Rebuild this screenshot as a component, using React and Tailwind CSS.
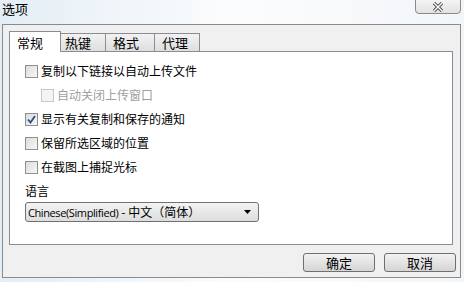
// Boîte de dialogue « 选项 » façon Windows 7
const font = { fontFamily: '"Noto Sans CJK SC", "Liberation Sans", sans-serif' }

function CheckBox({ checked, disabled }) {
  return (
    <span
      className={`w-[13px] h-[13px] border flex items-center justify-center shrink-0 ${
        disabled ? 'border-[#c8c8c8] bg-[#f4f4f4]' : 'border-[#8e8f8f] bg-gradient-to-br from-[#dcdcdc] to-[#f8f8f8]'
      }`}
    >
      {checked && (
        <svg width="9" height="9" viewBox="0 0 9 9">
          <path d="M1 4.5 L3.5 7.5 L8 1" fill="none" stroke="#2c4a8c" strokeWidth="1.8" />
        </svg>
      )}
    </span>
  )
}

function Row({ label, checked, disabled, indent }) {
  return (
    <div className={`h-[24px] flex items-center gap-[3px] ${indent ? 'pl-[16px]' : ''}`}>
      <CheckBox checked={checked} disabled={disabled} />
      <span className={disabled ? 'text-[#a0a0a0]' : 'text-black'}>{label}</span>
    </div>
  )
}

export default function App() {
  // Onglets inactifs : largeur et retrait du texte
  const tabs = [
    { label: '热键', cls: 'w-[46px] pl-[4px]' },
    { label: '格式', cls: 'w-[50px] pl-[7px]' },
    { label: '代理', cls: 'w-[46px] pl-[7px]' },
  ]

  return (
    <div
      className="w-[464px] h-[282px] relative overflow-hidden bg-gradient-to-r from-[#e4eef6] via-[#fbfcfd] to-[#f3f6f9] text-[12px] leading-none flex flex-col"
      style={font}
    >
      {/* Barre de titre */}
      <div className="h-[24px] flex items-start shrink-0">
        <span className="pl-[2px] pt-[2px] text-[13px] text-black">选项</span>
      </div>
      <div className="absolute top-[-1px] left-[415px] w-[46px] h-[15px] border border-[#8a8a8a] rounded-b-[4px] bg-gradient-to-b from-[#f4f4f4] to-[#e2e2e2] flex items-center justify-center">
        <svg width="12" height="10" viewBox="0 0 12 10">
          <path d="M2 1 L10 9 M10 1 L2 9" stroke="#4a4a4a" strokeWidth="3.2" />
          <path d="M2 1 L10 9 M10 1 L2 9" stroke="#ffffff" strokeWidth="1.4" />
        </svg>
      </div>

      {/* Cadre de la fenêtre */}
      <div className="ml-[2px] mr-[3px] h-[254px] border border-[#8b8b8b] bg-[#f0f0f0] flex flex-col px-[6px] pt-[6px]">
        {/* Onglets */}
        <div className="h-[20px] flex items-end relative z-10">
          <div className="w-[52px] h-[21px] -mb-[1px] bg-white border border-[#898c95] border-b-0 flex items-center pl-[7px] text-[13px]">
            常规
          </div>
          {tabs.map((t) => (
            <div
              key={t.label}
              className={`h-[18px] -ml-px border border-[#898c95] border-b-0 bg-gradient-to-b from-[#f2f2f2] to-[#dedede] flex items-center text-[13px] ${t.cls}`}
            >
              {t.label}
            </div>
          ))}
        </div>

        {/* Panneau */}
        <div className="h-[194px] w-[444px] bg-white border border-[#898c95] pl-[15px] pt-[7px]">
          <Row label="复制以下链接以自动上传文件" />
          <Row label="自动关闭上传窗口" disabled indent />
          <Row label="显示有关复制和保存的通知" checked />
          <Row label="保留所选区域的位置" />
          <Row label="在截图上捕捉光标" />
          <div className="h-[23px] flex items-center">语言</div>
          <div className="w-[234px] h-[20px] border border-[#707070] rounded-[3px] bg-gradient-to-b from-[#f3f3f3] to-[#dddddd] flex items-center pl-[2px] pr-[3px] justify-between">
            <span className="flex items-center">
              <span
                style={{ fontFamily: '"Open Sans", "Liberation Sans", sans-serif' }}
                className="text-[11px] tracking-[-0.4px]"
              >
                Chinese(Simplified)
              </span>
              <span className="ml-[3px]">- 中文（简体）</span>
            </span>
            <svg width="8" height="4" viewBox="0 0 8 4" className="mr-[3px]">
              <path d="M0 0 H7 L3.5 4 Z" fill="#000" />
            </svg>
          </div>
        </div>

        {/* Boutons */}
        <div className="flex justify-end gap-[9px] mt-[8px] mr-[-2px]">
          {['确定', '取消'].map((b) => (
            <button
              key={b}
              className="w-[72px] h-[19px] border border-[#707070] rounded-[3px] bg-gradient-to-b from-[#f2f2f2] to-[#d5d5d5] flex items-center justify-center text-[13px]"
            >
              {b}
            </button>
          ))}
        </div>
      </div>
    </div>
  )
}
